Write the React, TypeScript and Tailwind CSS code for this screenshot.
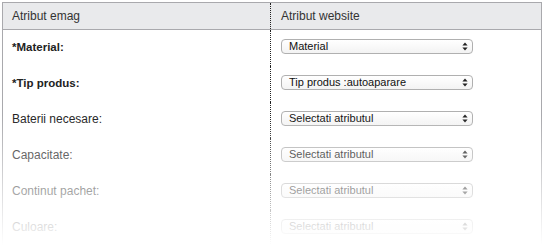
const rows = [
  { label: '*Material:', value: 'Material', bold: true },
  { label: '*Tip produs:', value: 'Tip produs :autoaparare', bold: true },
  { label: 'Baterii necesare:', value: 'Selectati atributul' },
  { label: 'Capacitate:', value: 'Selectati atributul' },
  { label: 'Continut pachet:', value: 'Selectati atributul' },
  { label: 'Culoare:', value: 'Selectati atributul' },
]

function Arrows() {
  return (
    <svg width="6" height="9" viewBox="0 0 6 9" className="shrink-0">
      <path d="M3 0.5 L5.6 3.6 L0.4 3.6 Z" fill="#222" />
      <path d="M3 8.5 L5.6 5.4 L0.4 5.4 Z" fill="#222" />
    </svg>
  )
}

function FakeSelect({ value }: { value: string }) {
  return (
    <div
      className="w-[192px] h-[15px] flex items-center justify-between pl-[7px] pr-[4px]
        rounded-[4px] border border-[#b0b0b0] bg-gradient-to-b from-white to-[#f3f3f3]
        text-[11px] leading-none text-[#111]"
    >
      <span>{value}</span>
      <Arrows />
    </div>
  )
}

export default function App() {
  return (
    <div
      className="relative w-[545px] h-[245px] overflow-hidden bg-white pt-[2px] pl-[2px]"
      style={{ fontFamily: '"Liberation Sans", Arial, sans-serif' }}
    >
      <div className="w-[540px] border border-[#a9a9ad] text-[12px] text-[#222]">
        <div className="flex h-[27px] bg-[#e9eaec] border-b border-[#a9a9ad] text-[#333]">
          <div className="w-[268px] flex items-center pl-[9px] border-r border-dotted border-[#222]">
            Atribut emag
          </div>
          <div className="flex-1 flex items-center pl-[10px]">Atribut website</div>
        </div>
        <div className="flex flex-col">
          {rows.map((r) => (
            <div key={r.label} className="flex h-[36px]">
              <div
                className={
                  r.bold
                    ? 'w-[268px] pl-[9px] pt-[10px] leading-[14px] text-[11.5px] font-bold border-r border-dotted border-[#222]'
                    : 'w-[268px] pl-[9px] pt-[10px] leading-[14px] border-r border-dotted border-[#222]'
                }
              >
                {r.label}
              </div>
              <div className="flex-1 pl-[10px] pt-[9px]">
                <FakeSelect value={r.value} />
              </div>
            </div>
          ))}
        </div>
      </div>
      {/* fade-out over the lower rows */}
      <div className="absolute left-0 right-0 top-[115px] h-[130px] bg-gradient-to-b from-white/0 to-white" />
    </div>
  )
}
